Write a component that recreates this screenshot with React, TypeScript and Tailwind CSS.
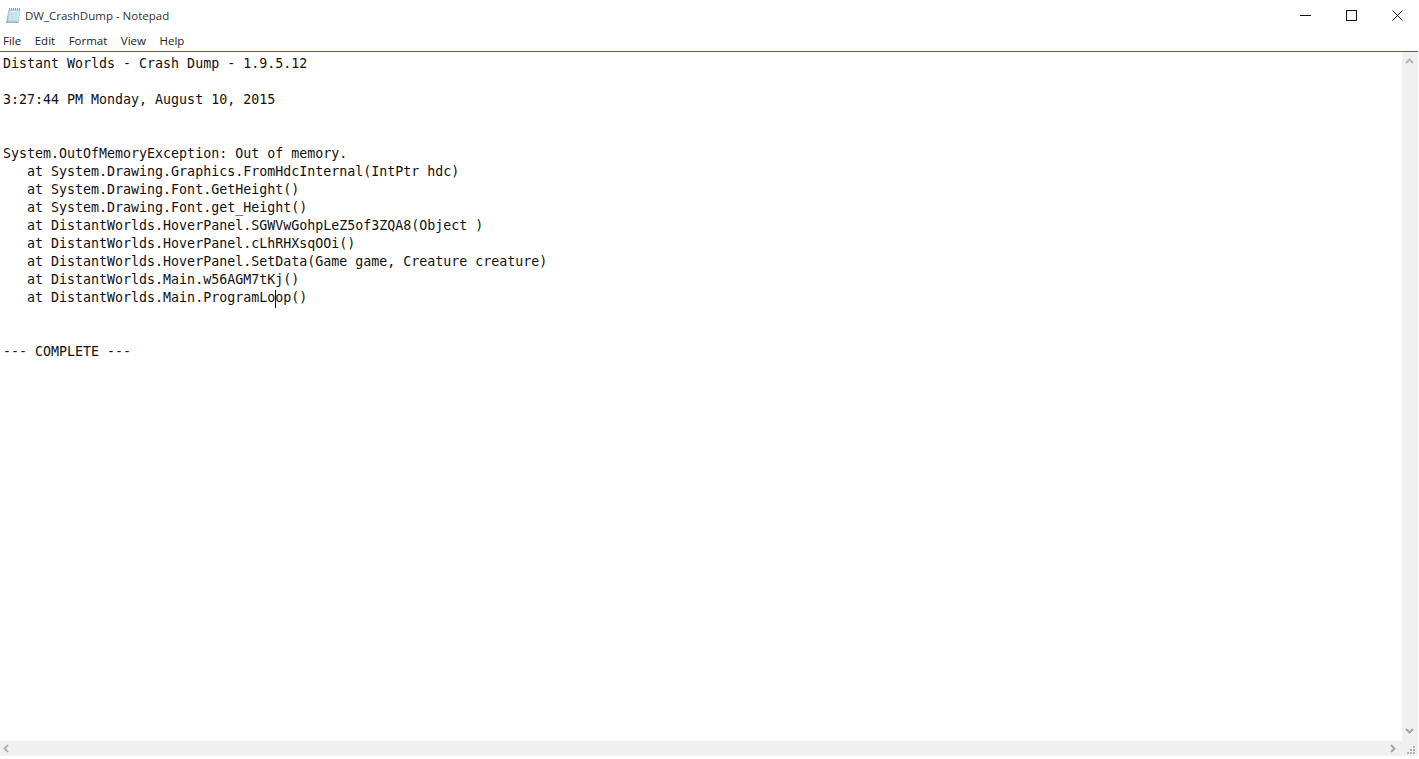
import React from 'react';

const lines = [
  'Distant Worlds - Crash Dump - 1.9.5.12',
  '',
  '3:27:44 PM Monday, August 10, 2015',
  '',
  '',
  'System.OutOfMemoryException: Out of memory.',
  '   at System.Drawing.Graphics.FromHdcInternal(IntPtr hdc)',
  '   at System.Drawing.Font.GetHeight()',
  '   at System.Drawing.Font.get_Height()',
  '   at DistantWorlds.HoverPanel.SGWVwGohpLeZ5of3ZQA8(Object )',
  '   at DistantWorlds.HoverPanel.cLhRHXsqOOi()',
  '   at DistantWorlds.HoverPanel.SetData(Game game, Creature creature)',
  '   at DistantWorlds.Main.w56AGM7tKj()',
];

const NotepadIcon = () => (
  <svg width="16" height="17" viewBox="0 0 16 17" className="ml-[5px] mr-[4px] -mt-[1px]">
    <path d="M3.5 3H15L13.5 16H1z" fill="#b5ad9c" />
    <path d="M4 2.5h11L13.8 14.5H2.6z" fill="#b4e0ee" />
    <path d="M5 4h8.8L13 13H3.9z" fill="#dcf1f8" />
    <path d="M5 6h8.5M4.7 8h8.6M4.5 10h8.6M4.3 12h8.6" stroke="#a8d5e6" strokeWidth="1" />
    <path d="M4.5 1v2.5M6.5 1v2.5M8.5 1v2.5M10.5 1v2.5M12.5 1v2.5M14.5 1v2.5" stroke="#8a969c" strokeWidth="1" />
  </svg>
);

export default function App() {
  return (
    <div className="w-[1419px] h-[759px] flex flex-col bg-white overflow-hidden text-black font-['Liberation_Sans',sans-serif]">
      {/* title bar */}
      <div className="h-[31px] flex items-center shrink-0">
        <NotepadIcon />
        <span className="text-[11.5px] text-[#333] font-['Open_Sans',sans-serif]">DW_CrashDump - Notepad</span>
        <div className="ml-auto flex items-center h-full">
          <button className="w-[46px] h-full flex items-center justify-center">
            <svg width="11" height="11" viewBox="0 0 11 11"><path d="M0 5.5h11" stroke="#111" strokeWidth="1" /></svg>
          </button>
          <button className="w-[46px] h-full flex items-center justify-center">
            <svg width="11" height="11" viewBox="0 0 11 11"><rect x="0.5" y="0.5" width="10" height="10" fill="none" stroke="#111" strokeWidth="1" /></svg>
          </button>
          <button className="w-[46px] h-full flex items-center justify-center mr-[-1px]">
            <svg width="11" height="11" viewBox="0 0 11 11"><path d="M0.5 0.5l10 10M10.5 0.5l-10 10" stroke="#111" strokeWidth="1" /></svg>
          </button>
        </div>
      </div>

      {/* menu */}
      <div className="h-[20px] flex items-center gap-[13.5px] pl-[3px] text-[11.5px] font-['Open_Sans',sans-serif] text-[#222] shrink-0">
        <span>File</span>
        <span>Edit</span>
        <span>Format</span>
        <span>View</span>
        <span>Help</span>
      </div>
      <div className="h-px mr-px bg-[#0f74bd] shrink-0" />

      {/* editor */}
      <div className="flex-1 min-h-0 flex">
        <pre className="flex-1 min-w-0 pl-[3px] pt-[3px] text-[13.3px] leading-[18px] text-[#111] font-['DejaVu_Sans_Mono',monospace]">
          {lines.map((l, i) => (
            <div key={i} className="h-[18px]">{l}</div>
          ))}
          <div className="h-[18px]">
            {'   at DistantWorlds.Main.ProgramLo'}
            <span className="relative">
              <span className="absolute left-0 top-0 w-px h-[18px] bg-black" />
            </span>
            {'op()'}
          </div>
          <div className="h-[18px]" />
          <div className="h-[18px]" />
          <div className="h-[18px]">--- COMPLETE ---</div>
        </pre>
        <div className="w-[16px] mr-px bg-[#f0f0f0] flex flex-col items-center justify-between pt-[6px] pb-[7px] pr-px">
          <svg width="9" height="6" viewBox="0 0 9 6"><path d="M1 5l3.5-3.5L8 5" fill="none" stroke="#b4b4b4" strokeWidth="2" /></svg>
          <svg width="9" height="6" viewBox="0 0 9 6"><path d="M1 1l3.5 3.5L8 1" fill="none" stroke="#a6a6a6" strokeWidth="2" /></svg>
        </div>
      </div>

      {/* horizontal scrollbar */}
      <div className="h-[15px] mb-[3px] mr-px flex items-center shrink-0 bg-[#f0f0f0]">
        <svg width="6" height="9" viewBox="0 0 6 9" className="ml-[3px]"><path d="M5 1L1.5 4.5 5 8" fill="none" stroke="#b4b4b4" strokeWidth="2" /></svg>
        <svg width="6" height="9" viewBox="0 0 6 9" className="ml-auto mr-[11px]"><path d="M1 1l3.5 3.5L1 8" fill="none" stroke="#a6a6a6" strokeWidth="2" /></svg>
        <svg width="9" height="9" viewBox="0 0 9 9" className="self-end mb-px mr-[2px]">
          <g fill="#b0b0b0">
            <rect x="6" y="0" width="2" height="2" />
            <rect x="3" y="3" width="2" height="2" />
            <rect x="6" y="3" width="2" height="2" />
            <rect x="0" y="6" width="2" height="2" />
            <rect x="3" y="6" width="2" height="2" />
            <rect x="6" y="6" width="2" height="2" />
          </g>
        </svg>
      </div>
    </div>
  );
}
